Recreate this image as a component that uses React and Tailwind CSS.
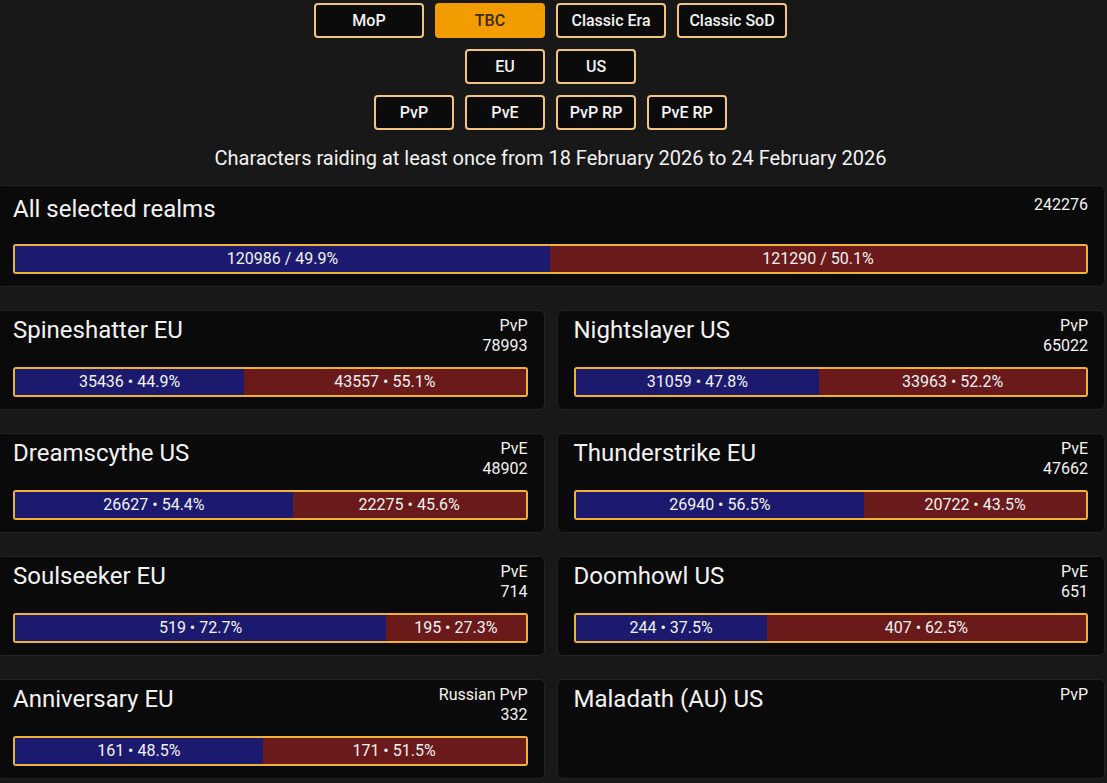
const versions = ['MoP', 'TBC', 'Classic Era', 'Classic SoD']
const regions = ['EU', 'US']
const types = ['PvP', 'PvE', 'PvP RP', 'PvE RP']

const realms = [
  { name: 'Spineshatter EU', type: 'PvP', total: 78993, a: 35436, ap: '44.9', h: 43557, hp: '55.1' },
  { name: 'Nightslayer US', type: 'PvP', total: 65022, a: 31059, ap: '47.8', h: 33963, hp: '52.2' },
  { name: 'Dreamscythe US', type: 'PvE', total: 48902, a: 26627, ap: '54.4', h: 22275, hp: '45.6' },
  { name: 'Thunderstrike EU', type: 'PvE', total: 47662, a: 26940, ap: '56.5', h: 20722, hp: '43.5' },
  { name: 'Soulseeker EU', type: 'PvE', total: 714, a: 519, ap: '72.7', h: 195, hp: '27.3' },
  { name: 'Doomhowl US', type: 'PvE', total: 651, a: 244, ap: '37.5', h: 407, hp: '62.5' },
  { name: 'Anniversary EU', type: 'Russian PvP', total: 332, a: 161, ap: '48.5', h: 171, hp: '51.5' },
  { name: 'Maladath (AU) US', type: 'PvP' },
]

function FilterButton({ label, active, wide }) {
  return (
    <button
      className={
        (wide ? 'w-[110px] ' : 'w-[80px] ') +
        (active
          ? 'bg-[#f39c00] border-[#f39c00] text-[#3b2a0c] '
          : 'bg-[#0b0b0b] border-[#f3c47d] text-[#f2f2f2] ') +
        'h-[35px] rounded-[4px] border-2 text-[16px] font-medium'
      }
    >
      {label}
    </button>
  )
}

function FactionBar({ a, h, aLabel, hLabel }) {
  const pct = (a / (a + h)) * 100
  return (
    <div className="flex h-[30px] rounded-[3px] border-2 border-[#f0b232] overflow-hidden text-[16px] text-[#f2f2f2]">
      <div className="bg-[#1c1a6e] flex items-center justify-center" style={{ width: `${pct}%` }}>
        {aLabel}
      </div>
      <div className="bg-[#6b1a1b] flex-1 flex items-center justify-center">{hLabel}</div>
    </div>
  )
}

function RealmCard({ realm }) {
  return (
    <div className="bg-[#0a0a0a] border border-[#232323] rounded-[6px] px-[16px] pt-[5px] pb-[12px]">
      <div className="flex justify-between h-[40px]">
        <div className="text-[24px] leading-[29px] text-[#f2f2f2]">{realm.name}</div>
        <div className="text-right text-[16px] leading-[20px] text-[#f2f2f2]">
          <div>{realm.type}</div>
          {realm.total != null && <div>{realm.total}</div>}
        </div>
      </div>
      {realm.a != null && (
        <div className="mt-[11px]">
          <FactionBar
            a={realm.a}
            h={realm.h}
            aLabel={`${realm.a} • ${realm.ap}%`}
            hLabel={`${realm.h} • ${realm.hp}%`}
          />
        </div>
      )}
    </div>
  )
}

export default function App() {
  return (
    <div className="min-h-screen bg-[#181818] overflow-hidden" style={{ fontFamily: 'Roboto, "Noto Sans", sans-serif' }}>
      <div className="w-[1109px] -ml-[4px] pt-[3px]">
        <div className="flex flex-col items-center gap-[11px]">
          <div className="flex gap-[11px]">
            {versions.map((v) => (
              <FilterButton key={v} label={v} active={v === 'TBC'} wide />
            ))}
          </div>
          <div className="flex gap-[11px]">
            {regions.map((r) => (
              <FilterButton key={r} label={r} />
            ))}
          </div>
          <div className="flex gap-[11px]">
            {types.map((t) => (
              <FilterButton key={t} label={t} />
            ))}
          </div>
        </div>
        <div className="text-center text-[20px] leading-[24px] text-[#f2f2f2] mt-[16px]">
          Characters raiding at least once from 18 February 2026 to 24 February 2026
        </div>
        <div className="mt-[15px] bg-[#0a0a0a] border border-[#232323] rounded-[6px] px-[16px] pt-[9px] pb-[12px]">
          <div className="flex justify-between h-[39px]">
            <div className="text-[24px] leading-[29px] text-[#f2f2f2]">All selected realms</div>
            <div className="text-[16px] leading-[20px] text-[#f2f2f2]">242276</div>
          </div>
          <div className="mt-[10px]">
            <FactionBar a={120986} h={121290} aLabel="120986 / 49.9%" hLabel="121290 / 50.1%" />
          </div>
        </div>
        <div className="mt-[23px] grid grid-cols-2 gap-x-[12px] gap-y-[23px]">
          {realms.map((r) => (
            <RealmCard key={r.name} realm={r} />
          ))}
        </div>
      </div>
    </div>
  )
}
